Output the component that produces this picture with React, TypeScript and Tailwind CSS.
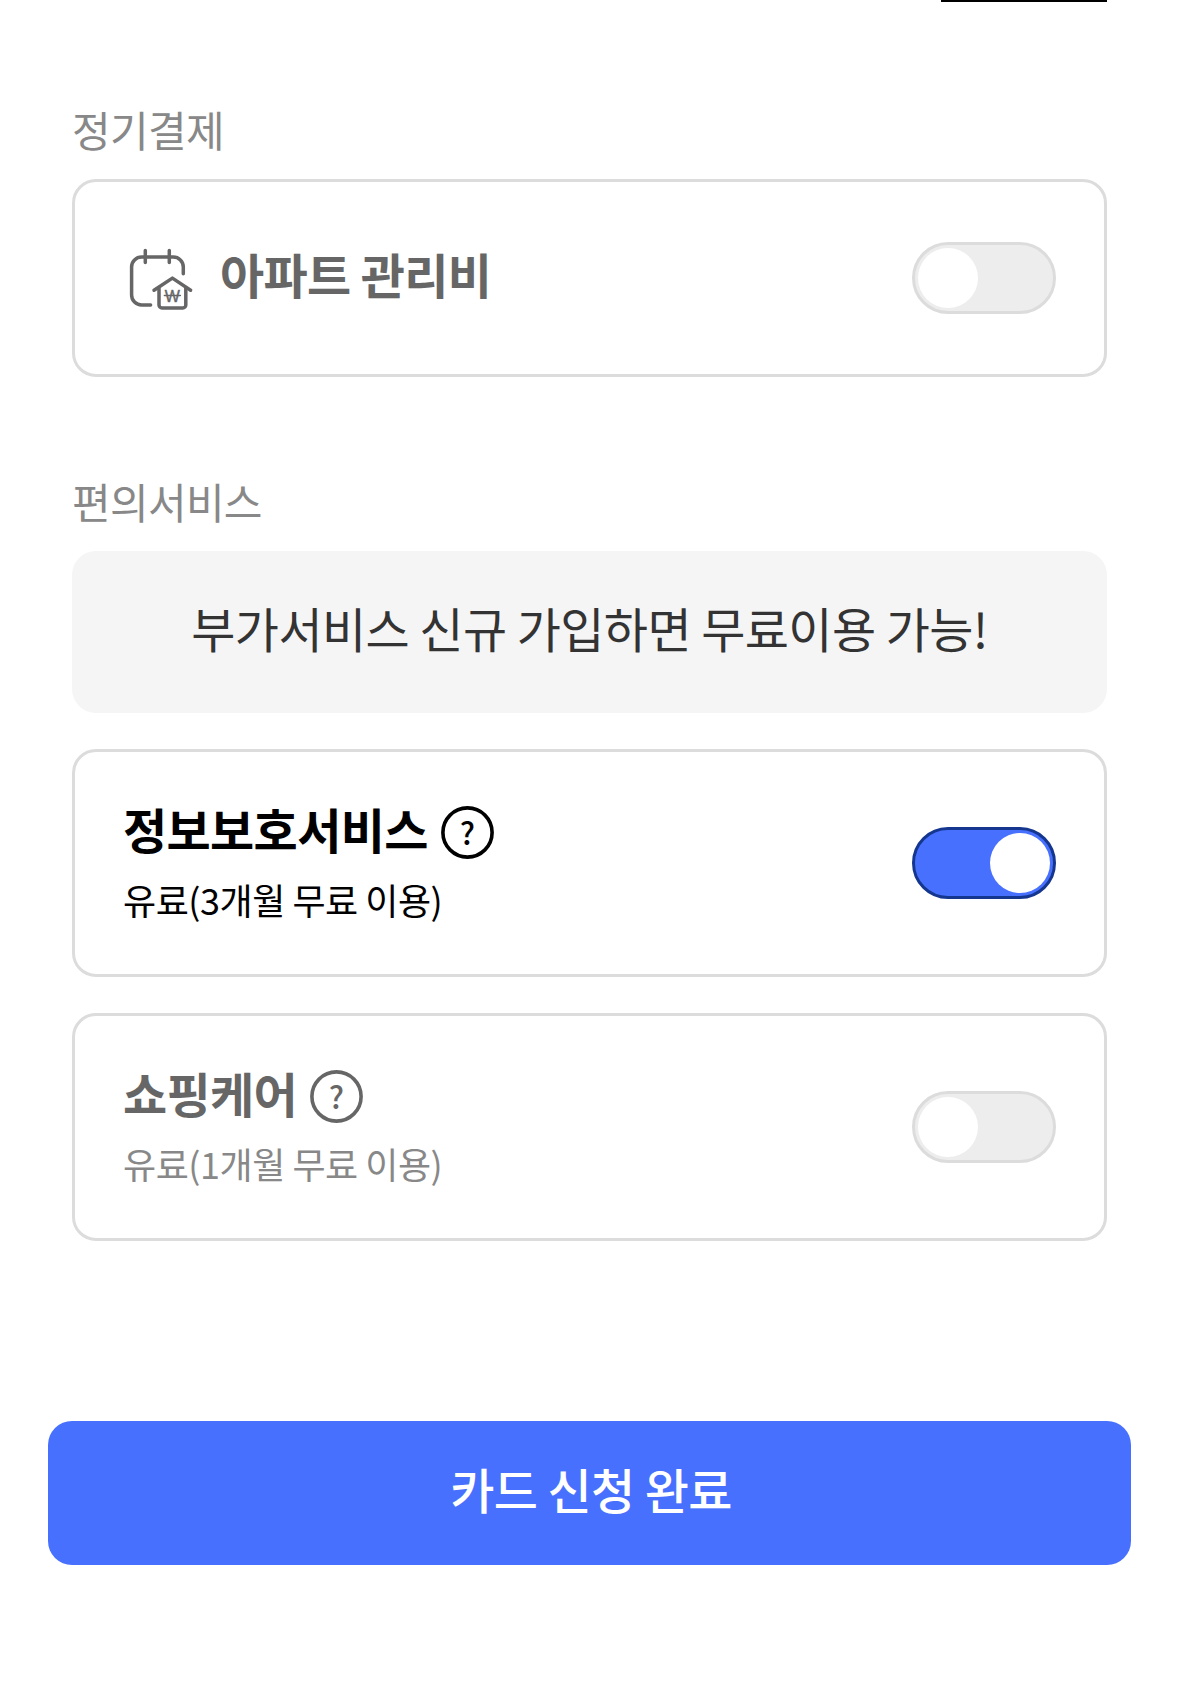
import React from "react";
import clsx from "clsx";

function CalendarHouseIcon() {
  return (
    <svg
      width="72"
      height="72"
      viewBox="0 0 72 72"
      fill="none"
      stroke="currentColor"
      strokeWidth="3.5"
      strokeLinecap="round"
      strokeLinejoin="round"
    >
      {/* calendar */}
      <path d="M59.3 29.8V23a10 10 0 0 0-10-10H17.6a10 10 0 0 0-10 10v28a10 10 0 0 0 10 10h9" />
      <path d="M21.3 6.6v12M45.3 6.6v12" />
      {/* house */}
      <path d="M30 46.2 48.4 34.1 66.6 46.2" />
      <path d="M35 44v17a3 3 0 0 0 3 3h20.8a3 3 0 0 0 3-3V44" />
      {/* won sign */}
      <text
        x="48.4"
        y="57.6"
        textAnchor="middle"
        fill="currentColor"
        stroke="currentColor"
        strokeWidth="0.4"
        className="font-['Liberation_Sans',sans-serif] text-[16px] tracking-normal"
      >
        W
      </text>
      <path d="M40.4 51.4h16" strokeWidth="1.5" />
    </svg>
  );
}

function Toggle({ checked, onChange }: { checked: boolean; onChange: () => void }) {
  return (
    <button
      type="button"
      role="switch"
      aria-checked={checked}
      onClick={onChange}
      className={clsx(
        "flex h-[72px] w-36 shrink-0 items-center rounded-full border-3 px-[3px]",
        checked ? "justify-end border-[#15368f] bg-[#4870ff]" : "justify-start border-[#dcdcdc] bg-[#ededed]"
      )}
    >
      <span className="size-[60px] rounded-full bg-white" />
    </button>
  );
}

function HelpButton() {
  return (
    <button type="button" className="mt-3.5 ml-[13px]">
      <svg width="53" height="53" viewBox="0 0 53 53" fill="none">
        <circle cx="26.5" cy="26.5" r="24.6" stroke="currentColor" strokeWidth="3.6" />
        <text
          x="26.5"
          y="39"
          textAnchor="middle"
          fill="currentColor"
          className="text-[31px] font-medium tracking-normal"
        >
          ?
        </text>
      </svg>
    </button>
  );
}

function ServiceCard({
  title,
  desc,
  checked,
  onChange,
}: {
  title: string;
  desc: string;
  checked: boolean;
  onChange: () => void;
}) {
  return (
    <div className="flex h-[228px] items-center justify-between rounded-3xl border-3 border-[#dcdcdc] px-12">
      <div className="-mt-[9px]">
        <div className={clsx("flex items-start", checked ? "text-black" : "text-[#666666]")}>
          <h3 className="text-5xl leading-[72px] font-bold tracking-[-0.013em]">{title}</h3>
          <HelpButton />
        </div>
        <p
          className={clsx(
            "mt-2 text-4xl leading-[54px] tracking-[-0.013em]",
            checked ? "text-black" : "text-[#888888]"
          )}
        >
          {desc}
        </p>
      </div>
      <Toggle checked={checked} onChange={onChange} />
    </div>
  );
}

export default function App() {
  const [apartment, setApartment] = React.useState(false);
  const [privacy, setPrivacy] = React.useState(true);
  const [shopping, setShopping] = React.useState(false);

  return (
    <main className="h-[1696px] w-[1179px] overflow-hidden bg-white font-['Noto_Sans_CJK_KR',sans-serif]">
      <div className="px-[72px]">
        <div className="ml-auto h-0.5 w-[166px] bg-black" />

        {/* Recurring payments */}
        <section className="pt-[95px]">
          <h2 className="text-[42px] leading-[63px] tracking-[-0.016em] text-[#888888]">정기결제</h2>
          <div className="mt-[19px] flex h-[198px] items-center justify-between rounded-3xl border-3 border-[#dcdcdc] px-12 text-[#666666]">
            <div className="flex items-center">
              <span className="mt-1 ml-px">
                <CalendarHouseIcon />
              </span>
              <h3 className="-mt-2.5 ml-6 text-5xl leading-[72px] font-bold tracking-[-0.014em]">아파트 관리비</h3>
            </div>
            <Toggle checked={apartment} onChange={() => setApartment(!apartment)} />
          </div>
        </section>

        {/* Convenience services */}
        <section className="pt-[92px]">
          <h2 className="text-[42px] leading-[63px] tracking-[-0.016em] text-[#888888]">편의서비스</h2>
          <div className="mt-[19px] h-[162px] rounded-3xl bg-[#f5f5f5] pt-10 text-center text-5xl leading-[72px] tracking-[-0.012em] text-[#333333]">
            부가서비스 신규 가입하면 무료이용 가능!
          </div>
          <div className="mt-9 flex flex-col gap-9">
            <ServiceCard
              title="정보보호서비스"
              desc="유료(3개월 무료 이용)"
              checked={privacy}
              onChange={() => setPrivacy(!privacy)}
            />
            <ServiceCard
              title="쇼핑케어"
              desc="유료(1개월 무료 이용)"
              checked={shopping}
              onChange={() => setShopping(!shopping)}
            />
          </div>
        </section>
      </div>

      <div className="px-12 pt-[180px]">
        <button
          type="button"
          className="block h-36 w-full rounded-3xl bg-[#4870ff] pb-2.5 pl-[3px] text-5xl leading-[72px] font-medium tracking-[-0.013em] text-white"
        >
          카드 신청 완료
        </button>
      </div>
    </main>
  );
}
